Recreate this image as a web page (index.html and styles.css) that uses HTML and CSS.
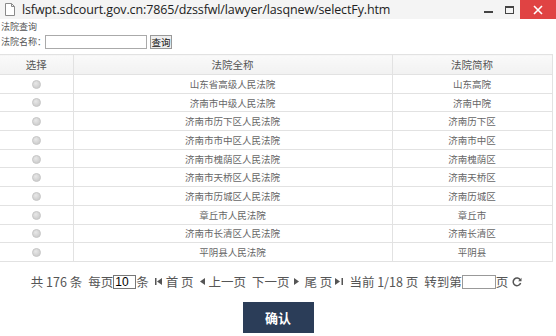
FILE: index.html
```html
<!DOCTYPE html>
<html lang="zh-CN">
<head>
<meta charset="utf-8">
<title>selectFy</title>
<link rel="stylesheet" href="styles.css">
</head>
<body>
<div class="window">
  <div class="titlebar">
    <svg class="page-icon" width="10" height="13" viewBox="0 0 10 13"><path d="M0.5 0.5 H6.5 L9.5 3.5 V12.5 H0.5 Z M6.5 0.5 V3.5 H9.5" fill="#fff" stroke="#8a8a8a" stroke-width="1"/></svg>
    <span class="url">lsfwpt.sdcourt.gov.cn:7865/dzssfwl/lawyer/lasqnew/selectFy.htm</span>
    <div class="controls">
      <span class="ctl min"><i></i></span>
      <span class="ctl max"><i></i></span>
      <span class="ctl close">
        <svg width="10" height="10" viewBox="0 0 10 10"><path d="M1 1 L9 9 M9 1 L1 9" stroke="#fff" stroke-width="1.6"/></svg>
      </span>
    </div>
  </div>
  <div class="content">
    <div class="search-title">法院查询</div>
    <div class="search-row">
      <label>法院名称：</label>
      <input class="name-input" type="text">
      <button class="btn-query">查询</button>
    </div>
    <table class="grid">
      <colgroup><col class="c1"><col class="c2"><col class="c3"></colgroup>
      <thead>
        <tr><th>选择</th><th>法院全称</th><th>法院简称</th></tr>
      </thead>
      <tbody>
        <tr><td><span class="radio"></span></td><td>山东省高级人民法院</td><td>山东高院</td></tr>
        <tr><td><span class="radio"></span></td><td>济南市中级人民法院</td><td>济南中院</td></tr>
        <tr><td><span class="radio"></span></td><td>济南市历下区人民法院</td><td>济南历下区</td></tr>
        <tr><td><span class="radio"></span></td><td>济南市市中区人民法院</td><td>济南市中区</td></tr>
        <tr><td><span class="radio"></span></td><td>济南市槐荫区人民法院</td><td>济南槐荫区</td></tr>
        <tr><td><span class="radio"></span></td><td>济南市天桥区人民法院</td><td>济南天桥区</td></tr>
        <tr><td><span class="radio"></span></td><td>济南市历城区人民法院</td><td>济南历城区</td></tr>
        <tr><td><span class="radio"></span></td><td>章丘市人民法院</td><td>章丘市</td></tr>
        <tr><td><span class="radio"></span></td><td>济南市长清区人民法院</td><td>济南长清区</td></tr>
        <tr><td><span class="radio"></span></td><td>平阴县人民法院</td><td>平阴县</td></tr>
      </tbody>
    </table>
    <div class="pager">
      <span>共 176 条</span>
      <span class="gap">每页<input class="per" type="text" value="10">条</span>
      <span class="gap"><svg class="ic" width="8" height="7" viewBox="0 0 8 7"><rect x="0" y="0" width="1.5" height="7" fill="#555"/><path d="M7 0 L2 3.5 L7 7 Z" fill="#555"/></svg>首 页</span>
      <span class="gap"><svg class="ic" width="6" height="7" viewBox="0 0 6 7"><path d="M5 0 L0 3.5 L5 7 Z" fill="#555"/></svg>上一页</span>
      <span class="gap">下一页<svg class="ic r" width="6" height="7" viewBox="0 0 6 7"><path d="M1 0 L6 3.5 L1 7 Z" fill="#555"/></svg></span>
      <span class="gap">尾 页 <svg class="ic r" width="8" height="7" viewBox="0 0 8 7"><path d="M0 0 L5 3.5 L0 7 Z" fill="#555"/><rect x="6.5" y="0" width="1.5" height="7" fill="#555"/></svg></span>
      <span class="gap">当前 1/18 页</span>
      <span class="gap">转到第<input class="goto" type="text">页</span>
      <svg class="ic refresh" width="10" height="10" viewBox="0 0 10 10"><path d="M8.3 3 A3.8 3.8 0 1 0 8.6 6" fill="none" stroke="#555" stroke-width="1.5"/><path d="M9.5 0.8 L9.5 4.2 L6.1 4.2 Z" fill="#555"/></svg>
    </div>
    <div class="actions">
      <button class="btn-ok">确认</button>
    </div>
  </div>
</div>
</body>
</html>
```
FILE: styles.css
```css
* { box-sizing: border-box; }
html, body { margin: 0; padding: 0; }
body {
  width: 556px;
  height: 336px;
  overflow: hidden;
  background: #fff;
  font-family: "Noto Sans CJK SC", "Liberation Sans", sans-serif;
  color: #555;
}
.window { width: 556px; height: 336px; }
.titlebar {
  height: 19px;
  display: flex;
  align-items: center;
  background: #f4f4f4;
}
.page-icon { margin-left: 5px; margin-right: 7px; }
.url {
  font-family: "Open Sans", "Liberation Sans", sans-serif;
  font-size: 12.5px;
  color: #222;
  letter-spacing: -0.12px;
}
.controls { margin-left: auto; display: flex; height: 19px; }
.ctl { display: flex; align-items: center; justify-content: center; height: 19px; }
.ctl.min { width: 21px; }
.ctl.min i { width: 9px; height: 2px; background: #444; margin-top: 4px; }
.ctl.max { width: 21px; }
.ctl.max i { width: 9px; height: 8px; border: 1.5px solid #444; border-top-width: 2px; }
.ctl.close { width: 36px; background: #e04343; }
.content { padding: 0; }
.search-title {
  font-size: 9px;
  line-height: 12px;
  padding: 2px 0 0 1px;
  color: #555;
}
.search-row {
  display: flex;
  align-items: center;
  height: 15px;
  margin-top: 1px;
  padding-left: 1px;
  font-size: 9px;
}
.search-row label { flex: none; width: 44px; white-space: nowrap; color: #555; }
.name-input {
  width: 102px;
  height: 14px;
  border: 1px solid #aaa;
  padding: 0;
  margin: 0;
}
.btn-query {
  margin-left: 3px;
  height: 14px;
  width: 22px;
  padding: 0;
  border: 1px solid #999;
  background: #eee;
  font-family: "Noto Sans CJK SC", sans-serif;
  font-size: 9.5px;
  line-height: 12px;
  color: #111;
}
.grid {
  margin-top: 5px;
  width: 552px;
  border-collapse: collapse;
  table-layout: fixed;
  font-size: 9.5px;
}
.grid col.c1 { width: 73px; }
.grid col.c2 { width: 319px; }
.grid col.c3 { width: 160px; }
.grid th, .grid td {
  border: 1px solid #e2e2e2;
  text-align: center;
  padding: 0;
  font-weight: normal;
}
.grid th:first-child, .grid td:first-child { border-left: none; }
.grid th {
  height: 20px;
  font-size: 10.5px;
  color: #555;
  background: linear-gradient(#fafafa, #f1f1f1);
}
.grid td { height: 18.7px; color: #666; }
.radio {
  display: inline-block;
  width: 9px;
  height: 9px;
  border-radius: 50%;
  background: radial-gradient(circle at 40% 35%, #e8e8e8, #c4c4c4);
  border: 1px solid #c8c8c8;
  vertical-align: middle;
  margin-top: -2px;
}
.pager {
  display: flex;
  justify-content: center;
  align-items: center;
  height: 24px;
  margin-top: 8px;
  font-size: 12.5px;
  color: #555;
  white-space: nowrap;
}
.pager .gap { margin-left: 6px; display: inline-flex; align-items: center; }
.ic { margin-right: 3px; }
.ic.r { margin-left: 3px; margin-right: 0; }
.per {
  width: 23px;
  height: 14px;
  border: 1px solid #777;
  padding: 0 0 0 1px;
  margin: 0;
  font-family: "Liberation Sans", sans-serif;
  font-size: 12px;
  color: #000;
}
.goto {
  width: 34px;
  height: 14px;
  border: 1px solid #999;
  padding: 0;
  margin: 0;
}
.refresh { margin-left: 4px; }
.actions { display: flex; justify-content: center; margin-top: 8px; }
.btn-ok {
  width: 71px;
  height: 31px;
  background: #2b3d58;
  color: #fff;
  border: none;
  font-family: "Noto Sans CJK SC", sans-serif;
  font-weight: bold;
  font-size: 13px;
  padding: 0;
}
```
